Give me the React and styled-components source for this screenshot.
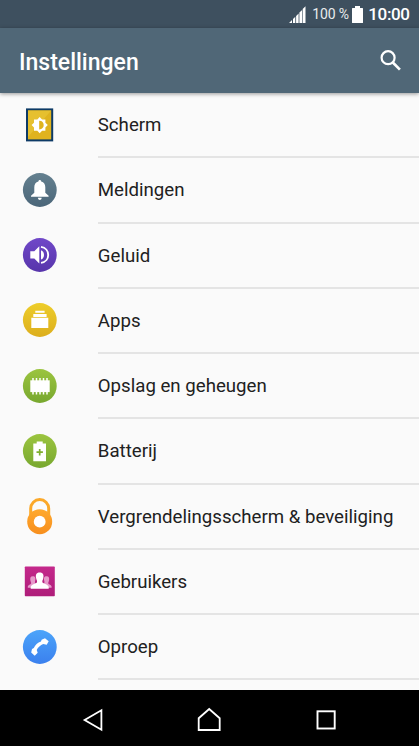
import React from "react";
import styled, { createGlobalStyle } from "styled-components";

const GlobalStyle = createGlobalStyle`
*{
box-sizing:border-box;
}
body{
margin:0;
background-color:#fafafa;
font-family:Roboto, sans-serif;
}
`;

const Screen = styled.div`
width:419px;
height:746px;
display:flex;
flex-direction:column;
overflow:hidden;
background-color:#fafafa;
`;

const StatusBar = styled.div`
height:28px;
flex:none;
display:flex;
align-items:center;
justify-content:flex-end;
padding-right:9.5px;
background-color:#3e505f;
color:#fff;
`;

const Percentage = styled.span`
font-size:14px;
line-height:28px;
letter-spacing:-0.15px;
margin:0 3px 0 6px;
color:#e8ebed;
`;

const Clock = styled.span`
font-size:17px;
line-height:28px;
font-weight:500;
letter-spacing:-0.4px;
margin:0 0 0 5.5px;
`;

const Header = styled.header`
height:65px;
flex:none;
display:flex;
align-items:center;
justify-content:space-between;
padding:0 16px 0 19px;
background-color:#506777;
box-shadow:0 1px 4px rgba(0, 0, 0, 0.4);
z-index:1;
`;

const Title = styled.h1`
margin:3px 0 0;
font-size:23px;
font-weight:500;
color:#fff;
`;

const List = styled.ul`
flex:1;
min-height:0;
overflow:hidden;
margin:0;
padding:0;
list-style:none;
`;

const Row = styled.li`
height:65.25px;
display:flex;
align-items:center;
padding-left:19.5px;
`;

const RowIcon = styled.svg`
width:40px;
height:40px;
flex:none;
margin:0 38.3px 2px 0;
`;

const RowLabel = styled.div`
flex:1;
height:100%;
display:flex;
align-items:center;
padding-top:0.8px;
font-size:18.65px;
white-space:nowrap;
color:#212121;
border-bottom:2px solid #e4e4e4;
`;

const NavBar = styled.nav`
height:56px;
flex:none;
display:flex;
align-items:center;
justify-content:space-between;
padding:4px 79px 0 78px;
background-color:#000;
`;

function Gradient({ id, from, to }) {
    return (
        <defs>
            <linearGradient id={id} x1="0" y1="0" x2="0" y2="1">
                <stop offset="0" stopColor={from} />
                <stop offset="1" stopColor={to} />
            </linearGradient>
        </defs>
    );
}

function Disc({ id, from, to }) {
    return (
        <>
            <Gradient id={id} from={from} to={to} />
            <circle cx="19.8" cy="20" r="16.9" fill={`url(#${id})`} />
        </>
    );
}

const display = (
    <>
        <rect x="6" y="3.4" width="27.2" height="33" fill="#0d3a66" />
        <rect x="8" y="5.4" width="23.2" height="29" fill="#dfb31f" />
        <path d="M8 5.4H31.2L8 32Z" fill="#e6c02f" />
        <path d="M19.7 12l2.4 2.4h3.3v3.3l2.4 2.4-2.4 2.4v3.3h-3.3l-2.4 2.4-2.4-2.4H14v-3.3l-2.4-2.4 2.4-2.4v-3.3h3.3z" fill="#fff" />
        <path d="M19.2 15.8c6 0 6 8.6 0 8.6z" fill="#dfb31f" />
    </>
);

const bell = (
    <>
        <Disc id="bell" from="#64808f" to="#4b6679" />
        <path d="M18.4 11.6c0-2 2.8-2 2.8 0 2.8.7 4.1 2.9 4.1 5.6v5.6l3.3 3v1H11v-1l3.3-3v-5.6c0-2.7 1.3-4.9 4.1-5.6z" fill="#fff" />
        <path d="M17.9 27.8h3.8c-.2 2.9-3.6 2.9-3.8 0z" fill="#fff" />
    </>
);

const sound = (
    <>
        <Disc id="sound" from="#7048c8" to="#5735ab" />
        <path d="M10.3 16.2h4l5-5v17.4l-5-5h-4z" fill="#fff" />
        <path d="M21 15.3c4 1.3 4 7.9 0 9.2z" fill="#fff" />
        <path d="M21 11.9c9.6 1.5 9.6 14.5 0 16" fill="none" stroke="#fff" strokeWidth="1.9" />
    </>
);

const apps = (
    <>
        <Disc id="apps" from="#edcd2a" to="#dcae1d" />
        <path d="M15.3 10.7h9.3v2h-9.3zM13.3 14h13.3v3H13.3zM11.3 17.8h17v10.1h-17z" fill="#fff" />
    </>
);

const storage = (
    <>
        <Disc id="storage" from="#9bc43f" to="#78a82f" />
        <path d="M10.3 14.3h19.4v11.8H10.3z" fill="#fff" />
        <path d="M13 12v16.4M16.5 12v16.4M20 12v16.4M23.5 12v16.4M27 12v16.4" stroke="#fff" strokeWidth="1.5" />
    </>
);

const battery = (
    <>
        <Disc id="battery" from="#9bc43f" to="#78a82f" />
        <path d="M16.7 12.4v-2h6v2H26v17.8H13.3V12.4z" fill="#fff" />
        <path d="M19.7 18v6.4M16.5 21.2h6.4" stroke="#7fae30" strokeWidth="1.7" />
    </>
);

const lock = (
    <>
        <Gradient id="lock" from="#ffa92d" to="#f78f1e" />
        <path d="M10.7 22v-9.4a9 9 0 0 1 18 0V22" fill="none" stroke="#fba829" strokeWidth="3" />
        <circle cx="19.7" cy="25.7" r="12.5" fill="url(#lock)" />
        <circle cx="19.7" cy="25.7" r="5.9" fill="#fff" />
    </>
);

const users = (
    <>
        <Gradient id="users" from="#c4288b" to="#ae1d79" />
        <rect x="4.8" y="5.6" width="30" height="29.7" rx=".7" fill="url(#users)" />
        <g fill="#e69aca">
            <path d="M12.8 15.3c2.6 0 3.1 2 2.3 4.7-.4 1.5-.2 2.2 1 2.8v4H7.8v-1.4c.2-1.6 2.9-2 3.3-3 .2-.8-.4-1.6-.6-2.4-.7-2.7-.1-4.7 2.3-4.7z" />
            <path d="M26.6 15.3c-2.6 0-3.1 2-2.3 4.7.4 1.5.2 2.2-1 2.8v4h8.3v-1.4c-.2-1.6-2.9-2-3.3-3-.2-.8.4-1.6.6-2.4.7-2.7.1-4.7-2.3-4.7z" />
        </g>
        <path d="M19.7 11.4c3.6 0 4.4 2.6 3.5 6.1-.3 1.3-.8 2-.9 3-.2 2.8 6 2.2 6.4 5.6v1.6h-18v-1.6c.4-3.4 6.6-2.8 6.4-5.6-.1-1-.6-1.7-.9-3-.9-3.5-.1-6.1 3.5-6.1z" fill="#fff" />
    </>
);

const call = (
    <>
        <Disc id="call" from="#4ca4fa" to="#3b80ee" />
        <path d="M21.6 12.7L25 11.3l3.7 3-2 3.4-3.5-.8c-2.7 1-5.3 3.4-6.5 6l1 2.8-3 3-3.5-3.3.8-3.5 1.8-.9c1.2-3 3.9-5.6 7.2-6.6z" fill="#fff" />
    </>
);

const items = [
    { label: "Scherm", icon: display },
    { label: "Meldingen", icon: bell },
    { label: "Geluid", icon: sound },
    { label: "Apps", icon: apps },
    { label: "Opslag en geheugen", icon: storage },
    { label: "Batterij", icon: battery },
    { label: "Vergrendelingsscherm & beveiliging", icon: lock },
    { label: "Gebruikers", icon: users },
    { label: "Oproep", icon: call },
];

export default function App() {
    return (
        <>
            <GlobalStyle />
            <Screen>
                <StatusBar>
                    <svg width="17" height="17" viewBox="0 0 17 17">
                        <path d="M0 17l3-3v3zM4 17v-4l2.3-2.3V17zM7.1 17V9.9l2.5-2.5V17zM10.4 17V6.6l2.7-2.7V17zM13.7 17V3l2.8-2.8V17z" fill="#fff" />
                    </svg>
                    <Percentage>100 %</Percentage>
                    <svg width="11" height="17" viewBox="0 0 11 17">
                        <path d="M3 2V0h5v2h2.4q.6 0 .6.6v13.8q0 .6-.6.6H.6q-.6 0-.6-.6V2.6Q0 2 .6 2z" fill="#fff" />
                    </svg>
                    <Clock>10:00</Clock>
                </StatusBar>
                <Header>
                    <Title>Instellingen</Title>
                    <svg width="24" height="24" viewBox="0 0 24 24" fill="none" stroke="#fff">
                        <circle cx="9.1" cy="8.7" r="6.5" strokeWidth="2.2" />
                        <path d="M13.6 13.3l7.3 7.3" strokeWidth="2.7" />
                    </svg>
                </Header>
                <List>
                    {items.map((item) => (
                        <Row key={item.label}>
                            <RowIcon viewBox="0 0 40 40">{item.icon}</RowIcon>
                            <RowLabel>{item.label}</RowLabel>
                        </Row>
                    ))}
                </List>
                <NavBar>
                    <svg width="28" height="28" viewBox="0 0 28 28" fill="none" stroke="#fff" strokeWidth="1.8">
                        <path d="M6.6 14L23.4 4.3v19.4z" />
                    </svg>
                    <svg width="28" height="28" viewBox="0 0 28 28" fill="none" stroke="#fff" strokeWidth="1.8">
                        <path d="M3.7 24V12.2L14.2 3l10.5 9.2V24z" />
                    </svg>
                    <svg width="28" height="28" viewBox="0 0 28 28" fill="none" stroke="#fff" strokeWidth="1.9">
                        <rect x="5.5" y="5.3" width="17.2" height="17.2" />
                    </svg>
                </NavBar>
            </Screen>
        </>
    );
}
